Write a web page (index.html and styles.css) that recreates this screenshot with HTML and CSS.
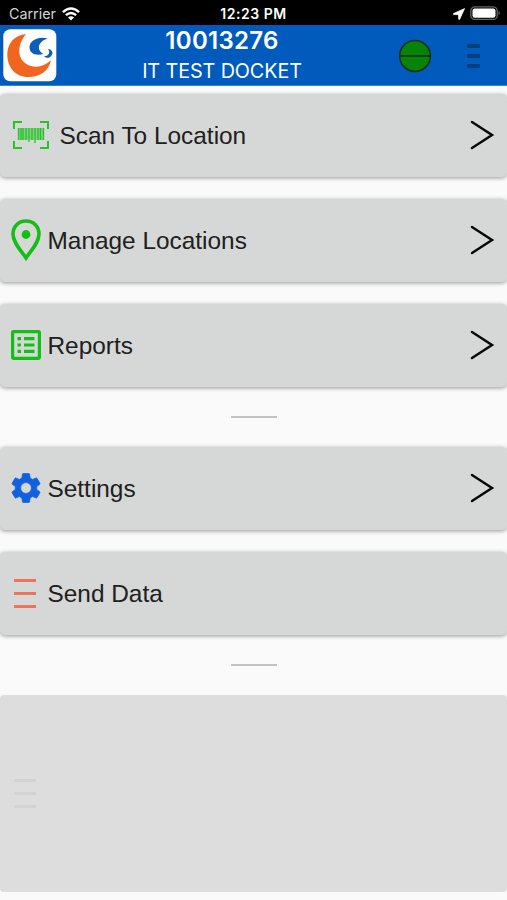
FILE: index.html
```html
<!DOCTYPE html>
<html lang="en">
<head>
<meta charset="utf-8">
<title>IT TEST DOCKET</title>
<link rel="stylesheet" href="styles.css">
</head>
<body>
<div class="status">
  <div class="carrier"><span class="carrier-name">Carrier</span>
    <svg width="18" height="14" viewBox="0 0 18 14" fill="none" stroke="#fff" stroke-width="2.4"><path d="M.9 5.1Q9-2.3 17.1 5.1M3.9 8.2Q9 3.6 14.1 8.2"/><path d="M6 10.5Q9 7.9 12 10.5L9 13.6Z" fill="#fff" stroke="none"/></svg>
  </div>
  <div class="time">12:23 PM</div>
  <div class="indicators">
    <svg width="12" height="12" viewBox="0 0 12 12"><path d="M11.6.6.4 5.600q-.6.7.3.9l4.800.2.2 4.600q.4.8 1 0Z" fill="#fff" stroke="#fff" stroke-width=".7"/></svg>
    <svg width="31" height="15" viewBox="0 0 31 15"><rect x=".8" y=".8" width="26.4" height="12.6" rx="4" fill="none" stroke="#666" stroke-width="1.3"/><rect x="2.5" y="2.4" width="23" height="9.4" rx="2.4" fill="#fff"/><path d="M28.6 5q2.2 2.1 0 4.2Z" fill="#777"/></svg>
  </div>
</div>
<header class="header">
  <svg class="logo" width="54" height="53" viewBox="0 0 54 53"><rect width="53" height="52" x=".3" y=".3" rx="7" fill="#fff"/><path d="M23 5C11 6 4 15 4.300 26C4.600 39 13 48 25 48C37 48 46 42 48 31C43 36 36 39 28 37C15 33 12 19 23 5Z" fill="#f2651f"/><path d="M45 9.500C35 6.500 26.500 12 26.500 18C26.500 25 33 27 40.500 25C33 21 35 12 45 9.500Z" fill="#0b5fb8"/><path d="M45 20C49 20 50.500 24 48.500 26.500C46.500 29.500 43 29.500 41 27C45 27.500 48 24 45 20Z" fill="#0b5fb8"/></svg>
  <div class="titles"><div class="number">10013276</div><div class="docket">IT TEST DOCKET</div></div>
  <svg class="online" width="34" height="34" viewBox="0 0 34 34"><circle cx="17" cy="17" r="15.400" fill="#078307" stroke="#0a2d1b" stroke-width="1.500"/><path d="M2 17H32" stroke="#0a2d1b" stroke-width="1.500"/></svg>
  <div class="menu"><i></i><i></i><i></i></div>
</header>
<main class="list">
  <div class="card">
    <svg class="icon scan" width="36" height="28" viewBox="0 0 36 28" fill="none" stroke="#26c426"><path d="M1 8V1H9M27 1H35V8M35 20V27H27M9 27H1V20" stroke-width="2"/><path d="M5.500 7V19M8 7V19M10 7V19M13 7V19M16 7V21M19 7V19M22 7V22M25 7V19M27.500 7V19M30.500 7V19" stroke-width="1.300"/><path d="M5 7H31V19H5Z" fill="#26c426" fill-opacity=".45" stroke="none"/></svg>
    <span class="label">Scan To Location</span>
    <svg class="arrow" width="25" height="30" viewBox="0 0 25 30"><path d="M2 2 22 15 2 28"/></svg>
  </div>
  <div class="card">
    <svg class="icon" width="30" height="42" viewBox="0 0 30 42"><path d="M15 2C7.500 2 2 7.500 2 15C2 24 10.500 32 15 39C19.500 32 28 24 28 15C28 7.500 22.500 2 15 2Z" fill="none" stroke="#14bf14" stroke-width="3.600"/><circle cx="15" cy="15.500" r="4.400" fill="#14bf14"/></svg>
    <span class="label">Manage Locations</span>
    <svg class="arrow" width="25" height="30" viewBox="0 0 25 30"><path d="M2 2 22 15 2 28"/></svg>
  </div>
  <div class="card">
    <svg class="icon" width="30" height="30" viewBox="0 0 30 30" fill="none" stroke="#14bf14"><rect x="1.600" y="1.600" width="26.800" height="26.800" rx=".8" stroke-width="3.200"/><path d="M6.500 8.700H10M13 8.700H23.500M6.500 15H10M13 15H23.500M6.500 21.400H10M13 21.400H23.500" stroke-width="3.200"/></svg>
    <span class="label">Reports</span>
    <svg class="arrow" width="25" height="30" viewBox="0 0 25 30"><path d="M2 2 22 15 2 28"/></svg>
  </div>
  <div class="divider"></div>
  <div class="card">
    <svg class="icon" width="30" height="30" viewBox="2 2 20 20"><path fill="#1160e0" stroke="#1160e0" stroke-width=".5" d="M19.140 12.940c.04-.3.060-.61.060-.94 0-.32-.020-.64-.070-.94l2.030-1.580c.18-.14.230-.41.120-.61l-1.920-3.320c-.12-.22-.37-.29-.59-.22l-2.390.96c-.5-.38-1.030-.7-1.620-.94L14.400 2.810c-.040-.24-.24-.41-.48-.41h-3.840c-.24 0-.43.17-.47.41L9.250 5.350C8.660 5.590 8.120 5.920 7.630 6.290L5.240 5.330c-.22-.080-.47 0-.59.220L2.740 8.870c-.12.210-.080.470.120.610l2.030 1.580c-.05.3-.09.630-.09.940s.020.640.070.940l-2.030 1.580c-.18.140-.23.410-.12.610l1.920 3.320c.12.220.37.290.59.220l2.390-.96c.5.380 1.030.7 1.620.94l.36 2.540c.050.240.24.410.48.410h3.840c.24 0 .44-.17.470-.41l.36-2.540c.59-.24 1.130-.56 1.620-.94l2.390.96c.22.080.47 0 .59-.22l1.920-3.320c.12-.22.070-.47-.12-.61L19.140 12.940zM12 15.600c-1.980 0-3.600-1.620-3.600-3.600s1.620-3.600 3.600-3.600 3.600 1.620 3.600 3.600S13.980 15.600 12 15.600z"/></svg>
    <span class="label">Settings</span>
    <svg class="arrow" width="25" height="30" viewBox="0 0 25 30"><path d="M2 2 22 15 2 28"/></svg>
  </div>
  <div class="card">
    <div class="icon bars"><i></i><i></i><i></i></div>
    <span class="label">Send Data</span>
  </div>
  <div class="divider"></div>
  <div class="card empty"><div class="icon bars"><i></i><i></i><i></i></div></div>
</main>
</body>
</html>
```
FILE: styles.css
```css
* { box-sizing: border-box; }
body { margin: 0; height: 900px; overflow: hidden; background: #fafafa; font-family: "Liberation Sans", Arial, sans-serif; color: #202020; }
svg { display: block; flex: none; }
.status { display: grid; grid-template-columns: 1fr auto 1fr; align-items: center; height: 25px; padding: 2px 6px 0 9px; background: #000; color: #fff; font-family: Inter, sans-serif; }
.carrier { display: flex; align-items: center; gap: 6px; }
.carrier-name { font-size: 14.3px; color: #d4d4d4; }
.time { font-size: 14px; font-weight: 600; letter-spacing: .55px; padding-right: 3px; }
.indicators { display: flex; justify-content: flex-end; align-items: center; gap: 5px; }
.header { display: flex; align-items: center; height: 61px; padding: 1px 27px 0 3px; background: #005bbc; border-bottom: 1px solid #3c7fca; color: #fff; }
.titles { width: 330px; text-align: center; font-family: Inter, sans-serif; }
.number { font-size: 24px; line-height: 30px; font-weight: 600; letter-spacing: .3px; }
.docket { font-size: 19.8px; line-height: 30px; letter-spacing: -.1px; }
.online { margin-left: 11px; }
.menu { display: flex; flex-direction: column; gap: 6px; margin-left: auto; }
.menu i { width: 13px; height: 4px; background: #073f7d; border-radius: 1px; }
.list { display: flex; flex-direction: column; gap: 22px; padding-top: 8px; }
.card { display: flex; align-items: center; height: 83px; padding: 0 12px 0 10px; background: #d6d8d7; border-radius: 5px; box-shadow: 0 1px 4px rgba(0, 0, 0, .4); }
.icon { margin-left: .5px; margin-bottom: 1px; }
.label { margin-left: 7px; font-size: 24.4px; line-height: 30px; white-space: nowrap; }
.scan { margin-left: 3px; }
.scan + .label { margin-left: 10.5px; }
.arrow { margin: 0 0 1px auto; fill: none; stroke: #080808; stroke-width: 2.5; stroke-linecap: round; }
.divider { width: 46px; height: 2px; margin: 7px auto; background: #c2c2c2; }
.bars { display: flex; flex-direction: column; gap: 10px; width: 30px; padding-left: 3.500px; }
.bars i { width: 22px; height: 3px; background: #ed735c; }
.empty { height: 197px; background: #ddd; box-shadow: none; border-radius: 4px; }
.empty .bars i { background: #d3d3d3; }
```
